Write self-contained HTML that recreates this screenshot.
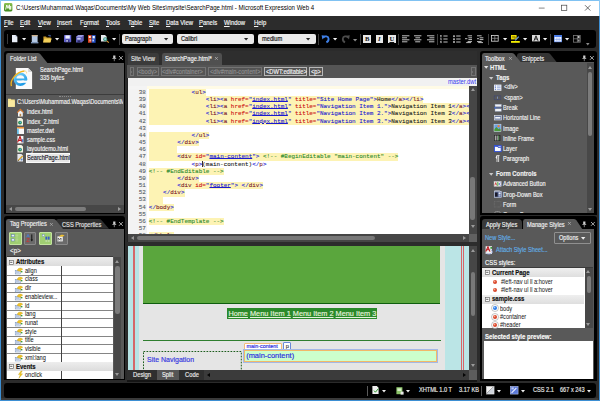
<!DOCTYPE html>
<html><head><meta charset="utf-8"><title>Microsoft Expression Web 4</title>
<style>
*{box-sizing:border-box;margin:0;padding:0}
html,body{width:600px;height:401px;overflow:hidden;background:#2b2b2b}
body{position:relative;font-family:"Liberation Sans",sans-serif;font-size:6.1px;color:#ececec;line-height:1;-webkit-text-stroke:0.16px}
.a{position:absolute}
.t{position:absolute;white-space:nowrap;line-height:8px;height:8px;transform:scaleX(.885);transform-origin:0 50%}
.t.d{transform:none}
u{text-decoration-thickness:0.5px;text-underline-offset:0.6px}
svg{position:absolute;overflow:visible}
#win{left:0;top:0;width:600px;height:401px;border:1.4px solid #3d8fd3;border-top:1px solid #80c2f2}
#title{left:1.2px;top:1px;width:597.6px;height:15px;background:#fff}
#menu{left:1.4px;top:16px;width:597.2px;height:14px;background:#2c2c2c}
#tb{left:4px;top:30px;width:592.4px;height:17.6px;background:#000;border-radius:3px}
#sb{left:4px;top:381.5px;width:593.5px;height:16px;background:#000;border-radius:3px}
.m{top:19.4px;font-size:6.72px;color:#f4f4f4}
.pan{background:#000;border-radius:3px 3px 0 0}
.pb{background:#595959}
.dd{background:#e9e9e9;border-radius:2px;top:33.6px;height:10.6px}
.dd .t{color:#111;top:1.4px;font-size:6.44px}
.car{width:0;height:0;border-left:1.9px solid transparent;border-right:1.9px solid transparent;border-top:2.2px solid #222}
.carw{width:0;height:0;border-left:1.8px solid transparent;border-right:1.8px solid transparent;border-top:2px solid #e8e8e8}
.sep{width:0.9px;background:#3e3e3e;top:33.5px;height:11px}
.fl{font-size:6.1px;color:#f0f0f0}
.bc{top:67.3px;height:9px;border:0.7px solid #747474;color:#8e8e8e;font-size:5.6px;line-height:7.4px;padding:0 1px;white-space:nowrap}
.code{font-family:"Liberation Mono",monospace;font-size:5.95px;-webkit-text-stroke:0.1px;left:128px;white-space:pre;height:7.17px;line-height:7.17px;width:341px}
.ln{position:absolute;left:0;width:19px;text-align:right;color:#555c64;padding-right:1px;background:#f3f3f3;height:7.3px}
.hl{background:#fdf3b4}
.c{position:absolute;left:21px;top:0;height:7.3px}
.tg{color:#2525d8}.nm{color:#7a1a2a}.at{color:#cc1111}.vl{color:#1a1ad0}.cm{color:#2e8b2e}.tx{color:#222}
.vl u{text-decoration-thickness:0.4px;text-underline-offset:0.4px}
.tbx{font-size:6.1px;color:#f2f2f2}
.row{position:absolute;left:6px;width:106px;height:8.6px;background:#fff;border-bottom:0.8px solid #c8c8c8}
</style></head><body>
<div id="win" class="a"></div>
<div id="title" class="a"></div>
<div class="a" style="left:0;top:0;width:1.2px;height:16px;background:#8ecaf4"></div>
<div class="a" style="left:598.8px;top:0;width:1.2px;height:16px;background:#8ecaf4"></div>

<svg class="a" style="left:4.4px;top:3.4px" width="8.4" height="8.4" viewBox="0 0 8.4 8.4"><defs><linearGradient id="gi" x1="0" y1="0" x2="0" y2="1"><stop offset="0" stop-color="#8cc152"/><stop offset="1" stop-color="#3f8a1e"/></linearGradient></defs><rect width="8.4" height="8.4" rx="1.4" fill="url(#gi)"/><path d="M1.6 6.6 L2.8 2 L4 5.4 L5.4 1.8 L5.6 6.6" stroke="#fff" stroke-width="0.9" fill="none"/><rect x="6" y="3" width="1.3" height="3.6" fill="#eaf5d8"/></svg>
<div class="t" style="left:15.6px;top:3.6px;font-size:6.89px;color:#000;-webkit-text-stroke:0">C:\Users\Muhammad.Waqas\Documents\My Web Sites\mysite\SearchPage.html - Microsoft Expression Web 4</div>
<svg class="a" style="left:530px;top:1px" width="68" height="15" viewBox="530 1 68 15"><path d="M538.8 8.1h5.8" stroke="#555" stroke-width="0.7"/><rect x="561.6" y="5.2" width="5.2" height="5.2" fill="none" stroke="#444" stroke-width="0.7"/><path d="M585 5.2l5.4 5.4M590.4 5.2l-5.4 5.4" stroke="#333" stroke-width="0.7"/></svg>
<div id="menu" class="a"></div>
<div class="t m" style="left:4px"><u>F</u>ile</div>
<div class="t m" style="left:20.4px"><u>E</u>dit</div>
<div class="t m" style="left:38px"><u>V</u>iew</div>
<div class="t m" style="left:57.4px"><u>I</u>nsert</div>
<div class="t m" style="left:80px">F<u>o</u>rmat</div>
<div class="t m" style="left:106px"><u>T</u>ools</div>
<div class="t m" style="left:128px">T<u>a</u>ble</div>
<div class="t m" style="left:149px"><u>S</u>ite</div>
<div class="t m" style="left:166px"><u>D</u>ata View</div>
<div class="t m" style="left:199.4px"><u>P</u>anels</div>
<div class="t m" style="left:224px"><u>W</u>indow</div>
<div class="t m" style="left:254px"><u>H</u>elp</div>
<div id="tb" class="a"></div><div class="a" style="left:7px;top:34px;width:0.8px;height:9.5px;background:#3a3a3a"></div>
<svg style="left:12px;top:35.2px" width="5.4" height="7.2" viewBox="0 0 5.4 7.2"><path d="M0 0h3.6l1.8 1.8v5.4h-5.4z" fill="#e9eef7"/><path d="M3.6 0v1.8h1.8z" fill="#9fb0cc"/></svg>
<svg style="left:22.099999999999998px;top:38.4px" width="4.2" height="2.6" viewBox="0 0 4.2 2.6"><path d="M0 0H4.2L2.1 2.6z" fill="#f2f2f2"/></svg>
<svg style="left:31px;top:34.6px" width="7.4" height="8.4" viewBox="0 0 7.4 8.4"><rect x="0.8" y="0" width="5.8" height="7.6" fill="#b4c8e2"/><rect x="0.8" y="0" width="5.8" height="1.3" fill="#cbb08a"/><rect x="0" y="7" width="7.4" height="1.4" fill="#7f96b8"/></svg>
<svg style="left:43.4px;top:34.8px" width="8.8" height="7.6" viewBox="0 0 8.8 7.6"><path d="M0.4 1.4h2.6l0.8 1h4v4.8h-7.4z" fill="#c89a2a"/><path d="M0 7.4l1.4-4h7.4l-1.6 4z" fill="#f2cf5a"/><path d="M5.2 0.4l2.2 0l-0.4 1.4" stroke="#5a7ad0" stroke-width="0.7" fill="none"/></svg>
<svg style="left:54.5px;top:38.4px" width="4.2" height="2.6" viewBox="0 0 4.2 2.6"><path d="M0 0H4.2L2.1 2.6z" fill="#f2f2f2"/></svg>
<svg style="left:63.8px;top:35px" width="7.2" height="7.2" viewBox="0 0 7.2 7.2"><rect width="7.2" height="7.2" rx="0.6" fill="#6262d0"/><rect x="1.4" y="0.4" width="4.4" height="3.2" fill="#eef0ff"/><rect x="1.8" y="4.6" width="3.6" height="2.6" fill="#34347c"/><rect x="2.4" y="5" width="1.3" height="1.8" fill="#dfe2ff"/></svg>
<svg style="left:76.2px;top:35px" width="7.8" height="7.4" viewBox="0 0 7.8 7.4"><path d="M2.2 0h5.6v5.2l-2 2.2h-5.8v-5.4z" fill="#5c5cb4"/><path d="M2.2 0h5.6l-2 2h-5.8z" fill="#9a9ae0"/><rect x="1.2" y="2.8" width="3.4" height="1.8" fill="#c8ccf4"/><rect x="1.6" y="5.4" width="2.6" height="2" fill="#2c2c68"/></svg>
<svg style="left:88.4px;top:34.8px" width="7.6" height="7.8" viewBox="0 0 7.6 7.8"><rect width="3.7" height="7.8" fill="#d8401c"/><rect x="3.7" width="3.9" height="7.8" fill="#2450c4"/><rect x="0.8" y="1" width="2" height="2" fill="#fbe0d6"/><rect x="1.4" y="4.4" width="1.8" height="2" fill="#f4b4a0"/><rect x="4.6" y="1" width="2.2" height="2.4" fill="#f0f4ff"/><rect x="4.4" y="4.6" width="1.6" height="1.8" fill="#c0ccf4"/></svg>
<svg style="left:100.6px;top:35px" width="8.2" height="7.8" viewBox="0 0 8.2 7.8"><path d="M0 0h4l1.6 1.6v5h-5.6z" fill="#e4e8ee"/><circle cx="4.2" cy="4.2" r="2" fill="#3f9a78"/><circle cx="4.2" cy="4.2" r="1.1" fill="#9ccbe6"/><path d="M5.8 5.8l2 1.8" stroke="#d89a30" stroke-width="1.1"/></svg>
<svg style="left:111.9px;top:38.4px" width="4.2" height="2.6" viewBox="0 0 4.2 2.6"><path d="M0 0H4.2L2.1 2.6z" fill="#f2f2f2"/></svg>
<div class="a sep" style="left:119px"></div>
<div class="a dd" style="left:122px;width:51.4px"><div class="t" style="left:3.200000000000003px">Paragraph</div><svg style="left:41.599999999999994px;top:4.2px" width="4.2" height="2.6" viewBox="0 0 4.2 2.6"><path d="M0 0H4.2L2.1 2.6z" fill="#222"/></svg></div>
<div class="a dd" style="left:177.4px;width:76.8px"><div class="t" style="left:3.5999999999999943px">Calibri</div><svg style="left:67.0px;top:4.2px" width="4.2" height="2.6" viewBox="0 0 4.2 2.6"><path d="M0 0H4.2L2.1 2.6z" fill="#222"/></svg></div>
<div class="a dd" style="left:258px;width:57.6px"><div class="t" style="left:4px">medium</div><svg style="left:47.8px;top:4.2px" width="4.2" height="2.6" viewBox="0 0 4.2 2.6"><path d="M0 0H4.2L2.1 2.6z" fill="#222"/></svg></div>
<div class="a sep" style="left:318.4px"></div>
<svg style="left:322px;top:34.8px" width="7.4" height="7.6" viewBox="0 0 7.4 7.6"><path d="M1.2 2.6 C3 0.6 6.4 1 6.6 3.8 C6.7 5.6 5.6 6.8 4.4 7.4" stroke="#3f7fe6" stroke-width="1.9" fill="none"/><path d="M-0.4 0.2l4.2 0.6l-3.4 3.6z" fill="#3f7fe6"/></svg>
<svg style="left:332.7px;top:38.4px" width="4.2" height="2.6" viewBox="0 0 4.2 2.6"><path d="M0 0H4.2L2.1 2.6z" fill="#f2f2f2"/></svg>
<svg style="left:342px;top:34.8px" width="7.4" height="7.6" viewBox="0 0 7.4 7.6"><path d="M6.2 2.6 C4.4 0.6 1 1 0.8 3.8 C0.7 5.6 1.8 6.8 3 7.4" stroke="#4c4c4c" stroke-width="1.8" fill="none"/><path d="M7.8 0.2l-4.2 0.6l3.4 3.6z" fill="#4c4c4c"/></svg>
<svg style="left:352.7px;top:38.6px" width="4.2" height="2.6" viewBox="0 0 4.2 2.6"><path d="M0 0H4.2L2.1 2.6z" fill="#8a8a8a"/></svg>
<div class="a sep" style="left:360px"></div>
<div class="a" style="left:363.4px;top:35px;width:7.6px;height:7.6px;background:#e8e8e8;display:flex;align-items:center;justify-content:center;color:#111;font-family:'Liberation Serif',serif;font-size:6.6px;line-height:7.6px;-webkit-text-stroke:0;font-weight:bold">B</div>
<div class="a" style="left:375.6px;top:35px;width:7.6px;height:7.6px;background:#e8e8e8;display:flex;align-items:center;justify-content:center;color:#111;font-family:'Liberation Serif',serif;font-size:6.6px;line-height:7.6px;-webkit-text-stroke:0;font-weight:bold;font-style:italic">I</div>
<div class="a" style="left:388px;top:35px;width:7.6px;height:7.6px;background:#e8e8e8;display:flex;align-items:center;justify-content:center;color:#111;font-family:'Liberation Serif',serif;font-size:6.6px;line-height:7.6px;-webkit-text-stroke:0;font-weight:bold"><u>U</u></div>
<div class="a sep" style="left:398.4px"></div>
<svg style="left:402px;top:35px" width="8" height="8" viewBox="0 0 8 8"><path d="M0 0.8H7.4" stroke="#d8d8d8" stroke-width="0.9"/><path d="M0 2.8H5" stroke="#d8d8d8" stroke-width="0.9"/><path d="M0 4.8H7.4" stroke="#d8d8d8" stroke-width="0.9"/><path d="M0 6.8H5.4" stroke="#d8d8d8" stroke-width="0.9"/></svg>
<svg style="left:414px;top:35px" width="8" height="8" viewBox="0 0 8 8"><path d="M0 0.8H7.4" stroke="#d8d8d8" stroke-width="0.9"/><path d="M1.4 2.8H6" stroke="#d8d8d8" stroke-width="0.9"/><path d="M0 4.8H7.4" stroke="#d8d8d8" stroke-width="0.9"/><path d="M1.2 6.8H6.2" stroke="#d8d8d8" stroke-width="0.9"/></svg>
<svg style="left:426.6px;top:35px" width="8" height="8" viewBox="0 0 8 8"><path d="M0 0.8H7.4" stroke="#d8d8d8" stroke-width="0.9"/><path d="M2.4 2.8H7.4" stroke="#d8d8d8" stroke-width="0.9"/><path d="M0 4.8H7.4" stroke="#d8d8d8" stroke-width="0.9"/><path d="M2 6.8H7.4" stroke="#d8d8d8" stroke-width="0.9"/></svg>
<div class="a sep" style="left:437.4px"></div>
<svg style="left:440.4px;top:35px" width="8" height="8" viewBox="0 0 8 8"><path d="M3.4 1H7.6" stroke="#d8d8d8" stroke-width="0.9"/><path d="M3.4 4H7.6" stroke="#d8d8d8" stroke-width="0.9"/><path d="M3.4 7H7.6" stroke="#d8d8d8" stroke-width="0.9"/><path d="M0.2 0.6H1.6" stroke="#d8d8d8" stroke-width="0.9"/><path d="M0.2 1.8H1.6" stroke="#d8d8d8" stroke-width="0.9"/><path d="M0.2 3.8H1.6" stroke="#d8d8d8" stroke-width="0.9"/><path d="M0.6 4.8H1.6" stroke="#d8d8d8" stroke-width="0.9"/><path d="M0.2 6.6H1.6" stroke="#d8d8d8" stroke-width="0.9"/><path d="M0.4 7.6H1.6" stroke="#d8d8d8" stroke-width="0.9"/></svg>
<svg style="left:452.6px;top:35px" width="8" height="8" viewBox="0 0 8 8"><path d="M3.2 1H7.6" stroke="#d8d8d8" stroke-width="0.9"/><path d="M3.2 4H7.6" stroke="#d8d8d8" stroke-width="0.9"/><path d="M3.2 7H7.6" stroke="#d8d8d8" stroke-width="0.9"/><path d="M0.2 0.8H1.8" stroke="#d8d8d8" stroke-width="0.9"/><path d="M0.2 1.6H1.8" stroke="#d8d8d8" stroke-width="0.9"/><path d="M0.2 3.8H1.8" stroke="#d8d8d8" stroke-width="0.9"/><path d="M0.2 4.6H1.8" stroke="#d8d8d8" stroke-width="0.9"/><path d="M0.2 6.6H1.8" stroke="#d8d8d8" stroke-width="0.9"/><path d="M0.2 7.4H1.8" stroke="#d8d8d8" stroke-width="0.9"/></svg>
<svg style="left:465px;top:35px" width="8" height="8" viewBox="0 0 8 8"><path d="M2.6 0.8H7" stroke="#cfcfcf" stroke-width="0.9"/><path d="M3.4 2.8H7" stroke="#cfcfcf" stroke-width="0.9"/><path d="M3.4 4.6H7" stroke="#cfcfcf" stroke-width="0.9"/><path d="M2.6 6.6H7" stroke="#cfcfcf" stroke-width="0.9"/><path d="M0 3.7H2.4" stroke="#cfcfcf" stroke-width="0.9"/><path d="M1.2 7.6H6" stroke="#cfcfcf" stroke-width="0.9"/></svg>
<svg style="left:477.4px;top:35px" width="8" height="8" viewBox="0 0 8 8"><path d="M0 0.8H4.6" stroke="#cfcfcf" stroke-width="0.9"/><path d="M2.6 2.8H6.4" stroke="#cfcfcf" stroke-width="0.9"/><path d="M2.6 4.6H6.4" stroke="#cfcfcf" stroke-width="0.9"/><path d="M0 6.6H4.6" stroke="#cfcfcf" stroke-width="0.9"/><path d="M0 3.7H2" stroke="#cfcfcf" stroke-width="0.9"/><path d="M1.2 7.6H6" stroke="#cfcfcf" stroke-width="0.9"/></svg>
<div class="a sep" style="left:487.6px"></div>
<svg style="left:491.2px;top:35.2px" width="7.6" height="6.6" viewBox="0 0 7.6 6.6"><rect x="0.4" y="0.4" width="6.8" height="5.8" fill="none" stroke="#dcdcdc" stroke-width="0.8"/><path d="M0.4 3.3H7.2M3.8 0.4V6.2" stroke="#9a9a9a" stroke-width="0.7"/></svg>
<svg style="left:502.5px;top:38.4px" width="4.2" height="2.6" viewBox="0 0 4.2 2.6"><path d="M0 0H4.2L2.1 2.6z" fill="#f2f2f2"/></svg>
<svg style="left:511.4px;top:34.8px" width="8.8" height="7.8" viewBox="0 0 8.8 7.8"><rect x="0" y="0" width="5.6" height="4.4" fill="#f0e000"/><path d="M1 3.4l1-2.4l1 2.4M3.4 1v2.4h1.2v-1.4h-1.2" stroke="#6a5a00" stroke-width="0.5" fill="none"/><path d="M7.8 1.6l-3.6 3.8" stroke="#6a9ae0" stroke-width="1.3"/><rect x="0" y="6" width="8.8" height="1.8" fill="#f4ee00"/></svg>
<svg style="left:522.7px;top:38.4px" width="4.2" height="2.6" viewBox="0 0 4.2 2.6"><path d="M0 0H4.2L2.1 2.6z" fill="#f2f2f2"/></svg>
<svg style="left:532px;top:35px" width="8" height="6.4" viewBox="0 0 8 6.4"><rect width="8" height="6.4" fill="#d8d8d8"/><path d="M2 5.8l2-5l2 5M2.8 4h2.4" stroke="#222" stroke-width="1" fill="none"/></svg>
<svg style="left:543.3000000000001px;top:38.4px" width="4.2" height="2.6" viewBox="0 0 4.2 2.6"><path d="M0 0H4.2L2.1 2.6z" fill="#f2f2f2"/></svg>
<div class="a sep" style="left:550.4px"></div>
<svg style="left:554px;top:35px" width="8" height="7.2" viewBox="0 0 8 7.2"><rect width="8" height="7.2" fill="#4a7ce6"/><rect x="0.6" y="2" width="6.8" height="4.6" fill="#eef2ff"/><path d="M2.9 2.4v4M5.1 2.4v4M0.8 4.4h6.4" stroke="#6a90e0" stroke-width="0.5"/></svg>
<svg style="left:564.7px;top:38.4px" width="4.2" height="2.6" viewBox="0 0 4.2 2.6"><path d="M0 0H4.2L2.1 2.6z" fill="#f2f2f2"/></svg>
<svg style="left:573px;top:35px" width="7.6" height="7.6" viewBox="0 0 7.6 7.6"><rect x="0.4" y="0.4" width="6.8" height="6.8" fill="none" stroke="#7a7a7a" stroke-width="0.8"/><path d="M0.4 3.8H7.2M4.4 0.4V7.2" stroke="#8a8a8a" stroke-width="0.7"/><rect x="4.8" y="1" width="1.8" height="2" fill="#bdbdbd"/><rect x="4.8" y="4.6" width="1.8" height="2" fill="#9a9a9a"/></svg>
<svg style="left:585.8px;top:43.2px" width="3.6" height="2.6" viewBox="0 0 3.6 2.6"><path d="M0 0H3.6L1.8 2.6z" fill="#8a8a8a"/></svg><div class="a pan" style="left:4px;top:51.2px;width:121.2px;height:162.6px;border-radius:3px 3px 0 0"></div>
<svg style="left:5.6px;top:53px" width="42" height="10" viewBox="0 0 42 10"><path d="M0 10V2.4Q0 0 2.4 0H31.4Q33.4 0 34.6 1.4L41.4 10z" fill="#595959"/></svg>
<div class="a pb" style="left:5.6px;top:62.6px;width:118.4px;height:150px"></div>
<div class="t fl" style="left:10px;top:54.6px;font-size:6.44px">Folder List</div>
<svg style="left:111.8px;top:55px" width="4.6" height="6.4" viewBox="0 0 4.6 6.4"><path d="M1.2 0.5h2.2v2.4h0.8v0.8h-3.8v-0.8h0.8z" fill="#cfcfcf"/><path d="M2.3 3.7v2.5" stroke="#cfcfcf" stroke-width="0.6"/></svg>
<svg style="left:119.4px;top:56.4px" width="3.8" height="3.8" viewBox="0 0 3.8 3.8"><path d="M0 0L3.8 3.8M3.8 0L0 3.8" stroke="#d8d8d8" stroke-width="0.75"/></svg>
<svg style="left:9px;top:66px" width="24" height="25" viewBox="9 66 24 25"><defs><linearGradient id="ieg" x1="0" y1="0" x2="0.6" y2="1"><stop offset="0" stop-color="#7fd4fa"/><stop offset="1" stop-color="#1f9be6"/></linearGradient></defs><path d="M15.8 68h12.4l3.9 3.9v17.2h-16.3z" fill="#fafafa"/><path d="M28.2 68v3.9h3.9z" fill="#d4d4d4"/><circle cx="20.4" cy="79.2" r="5.4" fill="none" stroke="url(#ieg)" stroke-width="2.8"/><rect x="15.4" y="78.5" width="11.8" height="2" fill="#3aaeee"/><rect x="21.6" y="80.6" width="6.4" height="2.2" fill="#fafafa"/><path d="M11.4 86.2C9.8 80.4 15.6 72 24.4 71" fill="none" stroke="#f4b51e" stroke-width="1.3"/><path d="M24.4 71C26.2 71 26.8 72 26.5 73.4" fill="none" stroke="#f4c860" stroke-width="0.7"/></svg>
<div class="t fl" style="left:40px;top:65.8px;font-size:6.33px">SearchPage.html</div>
<div class="t fl" style="left:40px;top:74.2px;font-size:6.33px">335 bytes</div>
<div class="a" style="left:5.6px;top:94.4px;width:118.4px;height:0.8px;background:#3c3c3c"></div>
<div class="a" style="left:58.8px;top:96.4px;width:12.6px;height:0;border-top:0.9px dotted #8a8a8a"></div>
<svg style="left:8px;top:98.4px" width="6.8" height="8.8" viewBox="0 0 6.8 8.8"><path d="M0 0.8h2.6l0.8 0.8h3.4v7.2h-6.8z" fill="#f6e28c"/><path d="M0 2.6h6.8v6.2h-6.8z" fill="#f9ea9f"/></svg>
<div class="a" style="left:17.4px;top:98.4px;width:106px;height:9px;overflow:hidden"><div class="t fl" style="left:0;top:0;font-size:6.33px">C:\Users\Muhammad.Waqas\Documents\My Web Sites\mysite</div></div>
<svg style="left:17.4px;top:108.6px" width="7" height="7.6" viewBox="0 0 7 7.6"><path d="M0.2 3.6L3.4 0.4L6.6 3.6" stroke="#e07a2a" stroke-width="1.1" fill="none"/><path d="M1 3.6L3.4 1.4L5.8 3.6V7.4H1z" fill="#f4f4f4"/><rect x="2.6" y="4.8" width="1.6" height="2.6" fill="#b8864a"/></svg>
<div class="t fl" style="left:27px;top:108.39999999999999px;font-size:6.33px">index.html</div>
<svg style="left:17.4px;top:117.8px" width="7" height="7.6" viewBox="0 0 7 7.6"><path d="M0.4 0h4l1.6 1.6v6h-5.6z" fill="#f4f4e4"/><circle cx="3" cy="4.6" r="1.9" fill="#2a8a4a"/><circle cx="3.3" cy="4.3" r="0.9" fill="#5ab0e8"/></svg>
<div class="t fl" style="left:27px;top:117.6px;font-size:6.33px">index_2.html</div>
<svg style="left:17.4px;top:127px" width="7" height="7.6" viewBox="0 0 7 7.6"><rect x="0" y="0" width="7" height="7" fill="#fafafa"/><rect x="0" y="0" width="7" height="1.6" fill="#e8923a"/><rect x="0" y="1.6" width="1.8" height="5.4" fill="#6ac0e8"/></svg>
<div class="t fl" style="left:27px;top:126.8px;font-size:6.33px">master.dwt</div>
<svg style="left:17.4px;top:136.2px" width="7" height="7.6" viewBox="0 0 7 7.6"><rect x="0.4" y="0" width="6" height="7.4" fill="#f4f4f4"/><path d="M0.6 6.4L3 0.6L5.2 6.4M1.6 4.4h2.8" stroke="#c0181c" stroke-width="1.1" fill="none"/><rect x="4.8" y="3.2" width="1.6" height="3" fill="#5a80c8"/></svg>
<div class="t fl" style="left:27px;top:136.0px;font-size:6.33px">sample.css</div>
<svg style="left:17.4px;top:145.2px" width="7" height="7.6" viewBox="0 0 7 7.6"><path d="M0.4 0h4l1.6 1.6v6h-5.6z" fill="#f4f4e4"/><circle cx="3" cy="4.6" r="1.9" fill="#2a8a4a"/><circle cx="3.3" cy="4.3" r="0.9" fill="#5ab0e8"/></svg>
<div class="t fl" style="left:27px;top:145.0px;font-size:6.33px">layoutdemo.html</div>
<svg style="left:17.4px;top:154.2px" width="7" height="7.6" viewBox="0 0 7 7.6"><path d="M0.4 0h4l1.6 1.6v6h-5.6z" fill="#e8e8ec"/><path d="M1 6.6l4.6-4.6" stroke="#d8a020" stroke-width="1.2"/><path d="M0.8 7l1.2-0.4l-0.8-0.8z" fill="#444"/><circle cx="4.6" cy="5.4" r="1" fill="#5a8ad0"/></svg>
<div class="a" style="left:26px;top:153.2px;width:44.2px;height:9.4px;background:#e6e6e6;border:0.6px solid #fafafa"></div>
<div class="t" style="left:27.4px;top:154.0px;font-size:6.33px;color:#1a1a2a">SearchPage.html</div>
<div class="a" style="left:5.6px;top:205px;width:118.4px;height:7.6px;background:#474747"></div>
<div class="a" style="left:8.6px;top:206.5px;width:0;height:0;border-top:2.3px solid transparent;border-bottom:2.3px solid transparent;border-right:3.4px solid #9a9a9a"></div>
<div class="a" style="left:117.6px;top:206.5px;width:0;height:0;border-top:2.3px solid transparent;border-bottom:2.3px solid transparent;border-left:3.4px solid #9a9a9a"></div>
<div class="a" style="left:14.6px;top:206.8px;width:71.6px;height:4.2px;background:#7c7c7c;border-radius:2.1px"></div>
<div class="a pan" style="left:4px;top:215.6px;width:121.2px;height:164.8px"></div>
<svg style="left:56px;top:219.2px" width="54" height="9.8" viewBox="0 0 54 9.8"><path d="M0 9.8V2.4Q0 0 2.4 0H42.6Q44.6 0 45.8 1.4L53 9.8z" fill="#2f2f2f"/></svg>
<svg style="left:5.6px;top:219px" width="58" height="10" viewBox="0 0 58 10"><path d="M0 10V2.4Q0 0 2.4 0H47Q49 0 50.2 1.4L57 10z" fill="#595959"/></svg>
<div class="a pb" style="left:5.6px;top:228.8px;width:118.4px;height:150px"></div>
<div class="t fl" style="left:9.6px;top:220.4px;font-size:6.44px">Tag Properties</div>
<svg style="left:49.6px;top:222.6px" width="2.8" height="2.8" viewBox="0 0 2.8 2.8"><path d="M0 0L2.8 2.8M2.8 0L0 2.8" stroke="#b0b0b0" stroke-width="0.7"/></svg>
<div class="t fl" style="left:62.4px;top:220.6px;font-size:6.44px;color:#e0e0e0">CSS Properties</div>
<svg style="left:111.8px;top:220.6px" width="4.6" height="6.4" viewBox="0 0 4.6 6.4"><path d="M1.2 0.5h2.2v2.4h0.8v0.8h-3.8v-0.8h0.8z" fill="#cfcfcf"/><path d="M2.3 3.7v2.5" stroke="#cfcfcf" stroke-width="0.6"/></svg>
<svg style="left:119.4px;top:222px" width="3.8" height="3.8" viewBox="0 0 3.8 3.8"><path d="M0 0L3.8 3.8M3.8 0L0 3.8" stroke="#d8d8d8" stroke-width="0.75"/></svg>
<div class="a" style="left:8.8px;top:232px;width:12.8px;height:13px;background:#9fce72;border:0.7px solid #c4e4a0;border-radius:1px"></div>
<svg style="left:11.200000000000001px;top:234.4px" width="8" height="8" viewBox="0 0 8 8"><rect x="0.4" y="0.6" width="3" height="2.2" fill="#e8eef8" stroke="#5a7ab0" stroke-width="0.5"/><rect x="0.4" y="4.8" width="3" height="2.2" fill="#e8eef8" stroke="#5a7ab0" stroke-width="0.5"/><path d="M4.4 1.7h3M4.4 5.9h3M6 0v8" stroke="#b8d89a" stroke-width="0.7"/></svg>
<div class="a" style="left:23.6px;top:232px;width:12.8px;height:13px;background:#6b6b6b;border:0.7px solid #8a8a8a;border-radius:1px"></div>
<svg style="left:26.0px;top:234.4px" width="8" height="8" viewBox="0 0 8 8"><path d="M0.6 3.2L2 0.4L3.4 3.2M1.1 2.2h1.8" stroke="#4a7ae0" stroke-width="0.7" fill="none"/><path d="M0.6 4.6h2.8l-2.8 3h2.8" stroke="#d03030" stroke-width="0.7" fill="none"/><path d="M5.8 0.4v6" stroke="#111" stroke-width="1"/><path d="M4.6 5.4h2.4l-1.2 2z" fill="#111"/></svg>
<div class="a" style="left:39.4px;top:232px;width:12.8px;height:13px;background:#9fce72;border:0.7px solid #c4e4a0;border-radius:1px"></div>
<svg style="left:41.8px;top:234.4px" width="8" height="8" viewBox="0 0 8 8"><rect x="0.2" y="0.4" width="2.2" height="2" fill="#e8eef8" stroke="#5a7ab0" stroke-width="0.4"/><rect x="3.4" y="2.6" width="1.8" height="3" fill="#3a5ac8"/><rect x="5.8" y="2.6" width="1.8" height="3" fill="#3a5ac8"/><rect x="3.4" y="6.2" width="1.8" height="1.6" fill="#c0dca8"/><rect x="5.8" y="6.2" width="1.8" height="1.6" fill="#c0dca8"/></svg>
<div class="a" style="left:55px;top:232px;width:12.8px;height:13px;background:#6b6b6b;border:0.7px solid #8a8a8a;border-radius:1px"></div>
<svg style="left:57.4px;top:234.4px" width="8" height="8" viewBox="0 0 8 8"><rect x="0.4" y="2.4" width="5.4" height="5" fill="#f0f0f0"/><path d="M1.2 6.6V4l1.4 1.6L4 4v2.6" stroke="#333" stroke-width="0.6" fill="none"/><path d="M2 2.6C3 0.6 6 0.2 7.6 1.4L5.4 2.8z" fill="#f0c030"/></svg>
<div class="t fl" style="left:9.6px;top:247.4px;font-size:7.12px">&lt;p&gt;</div>
<div class="a" style="left:6.6px;top:256.2px;width:106px;height:122.6px;background:#fff;border-top:0.8px solid #3a3a3a"></div>
<div class="a" style="left:6.6px;top:257px;width:106px;height:9.4px;background:linear-gradient(#ededed,#dcdcdc)"></div>
<svg style="left:8.8px;top:260px" width="4.6" height="4.6" viewBox="0 0 4.6 4.6"><rect x="0.3" y="0.3" width="4" height="4" fill="#fff" stroke="#555" stroke-width="0.6"/><path d="M1.2 2.3h2.2" stroke="#111" stroke-width="0.7"/></svg>
<div class="t" style="left:16.4px;top:258.4px;font-size:6.78px;font-weight:bold;color:#111">Attributes</div>
<div class="a" style="left:6.6px;top:274.80px;width:106px;height:0.8px;background:#858585"></div>
<svg style="left:15px;top:267.20px" width="8" height="7.4" viewBox="0 0 8 7.4"><rect x="0.2" y="3.4" width="5" height="3.6" fill="#e6eef8" stroke="#6a8ab8" stroke-width="0.5"/><path d="M1 5h3.4" stroke="#3a5a9a" stroke-width="0.5"/><path d="M2.2 3.4C3 0.6 6.4 0.6 7.8 2.2L5.6 3.6L6.2 4.6L4.4 4.2z" fill="#f0c428" stroke="#b88a10" stroke-width="0.3"/><rect x="6" y="4" width="1.4" height="1.4" fill="#3a9a3a"/></svg>
<div class="t" style="left:25.4px;top:266.80px;font-size:6.33px;color:#111;-webkit-text-stroke:0.04px">align</div>
<div class="a" style="left:6.6px;top:283.49px;width:106px;height:0.8px;background:#858585"></div>
<svg style="left:15px;top:275.89px" width="8" height="7.4" viewBox="0 0 8 7.4"><rect x="0.2" y="3.4" width="5" height="3.6" fill="#e6eef8" stroke="#6a8ab8" stroke-width="0.5"/><path d="M1 5h3.4" stroke="#3a5a9a" stroke-width="0.5"/><path d="M2.2 3.4C3 0.6 6.4 0.6 7.8 2.2L5.6 3.6L6.2 4.6L4.4 4.2z" fill="#f0c428" stroke="#b88a10" stroke-width="0.3"/><rect x="6" y="4" width="1.4" height="1.4" fill="#3a9a3a"/></svg>
<div class="t" style="left:25.4px;top:275.49px;font-size:6.33px;color:#111;-webkit-text-stroke:0.04px">class</div>
<div class="a" style="left:6.6px;top:292.18px;width:106px;height:0.8px;background:#858585"></div>
<svg style="left:15px;top:284.58px" width="8" height="7.4" viewBox="0 0 8 7.4"><rect x="0.2" y="3.4" width="5" height="3.6" fill="#e6eef8" stroke="#6a8ab8" stroke-width="0.5"/><path d="M1 5h3.4" stroke="#3a5a9a" stroke-width="0.5"/><path d="M2.2 3.4C3 0.6 6.4 0.6 7.8 2.2L5.6 3.6L6.2 4.6L4.4 4.2z" fill="#f0c428" stroke="#b88a10" stroke-width="0.3"/><rect x="6" y="4" width="1.4" height="1.4" fill="#3a9a3a"/></svg>
<div class="t" style="left:25.4px;top:284.18px;font-size:6.33px;color:#111;-webkit-text-stroke:0.04px">dir</div>
<div class="a" style="left:6.6px;top:300.87px;width:106px;height:0.8px;background:#858585"></div>
<svg style="left:15px;top:293.27px" width="8" height="7.4" viewBox="0 0 8 7.4"><rect x="0.2" y="3.4" width="5" height="3.6" fill="#e6eef8" stroke="#6a8ab8" stroke-width="0.5"/><path d="M1 5h3.4" stroke="#3a5a9a" stroke-width="0.5"/><path d="M2.2 3.4C3 0.6 6.4 0.6 7.8 2.2L5.6 3.6L6.2 4.6L4.4 4.2z" fill="#f0c428" stroke="#b88a10" stroke-width="0.3"/><rect x="6" y="4" width="1.4" height="1.4" fill="#3a9a3a"/></svg>
<div class="t" style="left:25.4px;top:292.87px;font-size:6.33px;color:#111;-webkit-text-stroke:0.04px">enableview...</div>
<div class="a" style="left:6.6px;top:309.56px;width:106px;height:0.8px;background:#858585"></div>
<svg style="left:15px;top:301.96px" width="8" height="7.4" viewBox="0 0 8 7.4"><rect x="0.2" y="3.4" width="5" height="3.6" fill="#e6eef8" stroke="#6a8ab8" stroke-width="0.5"/><path d="M1 5h3.4" stroke="#3a5a9a" stroke-width="0.5"/><path d="M2.2 3.4C3 0.6 6.4 0.6 7.8 2.2L5.6 3.6L6.2 4.6L4.4 4.2z" fill="#f0c428" stroke="#b88a10" stroke-width="0.3"/><rect x="6" y="4" width="1.4" height="1.4" fill="#3a9a3a"/></svg>
<div class="t" style="left:25.4px;top:301.56px;font-size:6.33px;color:#111;-webkit-text-stroke:0.04px">id</div>
<div class="a" style="left:6.6px;top:318.25px;width:106px;height:0.8px;background:#858585"></div>
<svg style="left:15px;top:310.65px" width="8" height="7.4" viewBox="0 0 8 7.4"><rect x="0.2" y="3.4" width="5" height="3.6" fill="#e6eef8" stroke="#6a8ab8" stroke-width="0.5"/><path d="M1 5h3.4" stroke="#3a5a9a" stroke-width="0.5"/><path d="M2.2 3.4C3 0.6 6.4 0.6 7.8 2.2L5.6 3.6L6.2 4.6L4.4 4.2z" fill="#f0c428" stroke="#b88a10" stroke-width="0.3"/><rect x="6" y="4" width="1.4" height="1.4" fill="#3a9a3a"/></svg>
<div class="t" style="left:25.4px;top:310.25px;font-size:6.33px;color:#111;-webkit-text-stroke:0.04px">lang</div>
<div class="a" style="left:6.6px;top:326.94px;width:106px;height:0.8px;background:#858585"></div>
<svg style="left:15px;top:319.34px" width="8" height="7.4" viewBox="0 0 8 7.4"><rect x="0.2" y="3.4" width="5" height="3.6" fill="#e6eef8" stroke="#6a8ab8" stroke-width="0.5"/><path d="M1 5h3.4" stroke="#3a5a9a" stroke-width="0.5"/><path d="M2.2 3.4C3 0.6 6.4 0.6 7.8 2.2L5.6 3.6L6.2 4.6L4.4 4.2z" fill="#f0c428" stroke="#b88a10" stroke-width="0.3"/><rect x="6" y="4" width="1.4" height="1.4" fill="#3a9a3a"/></svg>
<div class="t" style="left:25.4px;top:318.94px;font-size:6.33px;color:#111;-webkit-text-stroke:0.04px">runat</div>
<div class="a" style="left:6.6px;top:335.63px;width:106px;height:0.8px;background:#858585"></div>
<svg style="left:15px;top:328.03px" width="8" height="7.4" viewBox="0 0 8 7.4"><rect x="0.2" y="3.4" width="5" height="3.6" fill="#e6eef8" stroke="#6a8ab8" stroke-width="0.5"/><path d="M1 5h3.4" stroke="#3a5a9a" stroke-width="0.5"/><path d="M2.2 3.4C3 0.6 6.4 0.6 7.8 2.2L5.6 3.6L6.2 4.6L4.4 4.2z" fill="#f0c428" stroke="#b88a10" stroke-width="0.3"/><rect x="6" y="4" width="1.4" height="1.4" fill="#3a9a3a"/></svg>
<div class="t" style="left:25.4px;top:327.63px;font-size:6.33px;color:#111;-webkit-text-stroke:0.04px">style</div>
<div class="a" style="left:6.6px;top:344.32px;width:106px;height:0.8px;background:#858585"></div>
<svg style="left:15px;top:336.72px" width="8" height="7.4" viewBox="0 0 8 7.4"><rect x="0.2" y="3.4" width="5" height="3.6" fill="#e6eef8" stroke="#6a8ab8" stroke-width="0.5"/><path d="M1 5h3.4" stroke="#3a5a9a" stroke-width="0.5"/><path d="M2.2 3.4C3 0.6 6.4 0.6 7.8 2.2L5.6 3.6L6.2 4.6L4.4 4.2z" fill="#f0c428" stroke="#b88a10" stroke-width="0.3"/><rect x="6" y="4" width="1.4" height="1.4" fill="#3a9a3a"/></svg>
<div class="t" style="left:25.4px;top:336.32px;font-size:6.33px;color:#111;-webkit-text-stroke:0.04px">title</div>
<div class="a" style="left:6.6px;top:353.01px;width:106px;height:0.8px;background:#858585"></div>
<svg style="left:15px;top:345.41px" width="8" height="7.4" viewBox="0 0 8 7.4"><rect x="0.2" y="3.4" width="5" height="3.6" fill="#e6eef8" stroke="#6a8ab8" stroke-width="0.5"/><path d="M1 5h3.4" stroke="#3a5a9a" stroke-width="0.5"/><path d="M2.2 3.4C3 0.6 6.4 0.6 7.8 2.2L5.6 3.6L6.2 4.6L4.4 4.2z" fill="#f0c428" stroke="#b88a10" stroke-width="0.3"/><rect x="6" y="4" width="1.4" height="1.4" fill="#3a9a3a"/></svg>
<div class="t" style="left:25.4px;top:345.01px;font-size:6.33px;color:#111;-webkit-text-stroke:0.04px">visible</div>
<div class="a" style="left:6.6px;top:361.70px;width:106px;height:0.8px;background:#858585"></div>
<svg style="left:15px;top:354.10px" width="8" height="7.4" viewBox="0 0 8 7.4"><rect x="0.2" y="3.4" width="5" height="3.6" fill="#e6eef8" stroke="#6a8ab8" stroke-width="0.5"/><path d="M1 5h3.4" stroke="#3a5a9a" stroke-width="0.5"/><path d="M2.2 3.4C3 0.6 6.4 0.6 7.8 2.2L5.6 3.6L6.2 4.6L4.4 4.2z" fill="#f0c428" stroke="#b88a10" stroke-width="0.3"/><rect x="6" y="4" width="1.4" height="1.4" fill="#3a9a3a"/></svg>
<div class="t" style="left:25.4px;top:353.70px;font-size:6.33px;color:#111;-webkit-text-stroke:0.04px">xml:lang</div>
<div class="a" style="left:6.6px;top:362.19px;width:106px;height:8.6px;background:linear-gradient(#ededed,#dcdcdc)"></div>
<svg style="left:8.8px;top:363.99px" width="4.6" height="4.6" viewBox="0 0 4.6 4.6"><rect x="0.3" y="0.3" width="4" height="4" fill="#fff" stroke="#555" stroke-width="0.6"/><path d="M1.2 2.3h2.2" stroke="#111" stroke-width="0.7"/></svg>
<div class="t" style="left:16.4px;top:362.59px;font-size:6.78px;font-weight:bold;color:#111">Events</div>
<svg style="left:18px;top:371.19px" width="5" height="7.4" viewBox="0 0 5 7.4"><path d="M3 0L0.4 3.6h1.8L0.8 7.4L4.6 2.8H2.6L4.2 0z" fill="#f4cc20" stroke="#b89010" stroke-width="0.3"/></svg>
<div class="t" style="left:25px;top:370.99px;font-size:6.33px;color:#111;-webkit-text-stroke:0.04px">onclick</div>
<div class="a" style="left:61.2px;top:266.4px;width:0.8px;height:95.79px;background:#444"></div>
<div class="a" style="left:61.2px;top:370.79px;width:0.8px;height:8.01px;background:#444"></div>
<div class="a" style="left:113.6px;top:257px;width:7.6px;height:121.8px;background:#484848"></div>
<div class="a" style="left:115.0px;top:259.6px;width:0;height:0;border-left:2.3px solid transparent;border-right:2.3px solid transparent;border-bottom:3.4px solid #9a9a9a"></div>
<div class="a" style="left:115.0px;top:372.6px;width:0;height:0;border-left:2.3px solid transparent;border-right:2.3px solid transparent;border-top:3.4px solid #9a9a9a"></div>
<div class="a" style="left:115.2px;top:266.4px;width:4.4px;height:48px;background:#7c7c7c;border-radius:2.2px"></div><div class="a" style="left:127.4px;top:51px;width:350px;height:14.2px;background:#2e2e2e"></div>
<div class="a" style="left:127.6px;top:53px;width:31px;height:12.2px;background:#3b3b3b;border-radius:2.4px 2.4px 0 0"></div>
<div class="t" style="left:131px;top:55px;font-size:6.55px;color:#e4e4e4">Site View</div>
<div class="a" style="left:161.6px;top:52.8px;width:60.4px;height:12.6px;background:#505050;border-radius:2.4px 2.4px 0 0"></div>
<div class="t" style="left:165px;top:55px;font-size:6.55px;color:#f4f4f4">SearchPage.html*</div>
<svg style="left:215.4px;top:56.8px" width="2.8" height="2.8" viewBox="0 0 2.8 2.8"><path d="M0 0L2.8 2.8M2.8 0L0 2.8" stroke="#b8b8b8" stroke-width="0.7"/></svg>
<div class="a" style="left:127.4px;top:65.2px;width:350px;height:12.6px;background:#555"></div>
<div class="a" style="left:127.4px;top:77.8px;width:350px;height:168px;background:#232323"></div>
<div class="a bc" style="left:130px;width:4.4px;padding:0"></div>
<div class="a" style="left:131.2px;top:70.6px;width:0;height:0;border-top:1.3px solid transparent;border-bottom:1.3px solid transparent;border-right:1.6px solid #8a8a8a"></div>
<div class="a bc" style="left:136.8px;width:21.8px;"><div class="t" style="left:0.5px;top:-0.4px;font-size:6.50px;color:#8e8e8e">&lt;body&gt;</div></div>
<div class="a bc" style="left:160.8px;width:45px;"><div class="t" style="left:0.5px;top:-0.4px;font-size:6.50px;color:#8e8e8e">&lt;div#container&gt;</div></div>
<div class="a bc" style="left:208px;width:54px;"><div class="t" style="left:0.5px;top:-0.4px;font-size:6.50px;color:#8e8e8e">&lt;div#main-content&gt;</div></div>
<div class="a bc" style="left:264.4px;width:42.8px;border-color:#b8b8b8;"><div class="t" style="left:0.5px;top:-0.4px;font-size:6.50px;color:#f2f2f2">&lt;DWT:editable&gt;</div></div>
<div class="a bc" style="left:309.2px;width:13.6px;border-color:#b8b8b8;"><div class="t" style="left:0.5px;top:-0.4px;font-size:6.50px;color:#f2f2f2">&lt;p&gt;</div></div>
<div class="a bc" style="left:470.6px;width:5.4px;padding:0"></div>
<div class="a" style="left:472.4px;top:70.6px;width:0;height:0;border-top:1.3px solid transparent;border-bottom:1.3px solid transparent;border-left:1.6px solid #8a8a8a"></div>
<div class="a" style="left:127.8px;top:77.8px;width:349.6px;height:7.8px;background:#f1f1f1"></div>
<div class="t" style="left:448px;top:77.6px;font-size:6.55px;-webkit-text-stroke:0;color:#3838f0">master.dwt</div>
<div class="a" style="left:127.8px;top:85.6px;width:341px;height:148.2px;background:#fff;overflow:hidden" id="codev">
<div class="a" style="left:0;top:0;width:341px;height:3.2px;background:#fffbe6"></div>
<div class="a" style="left:0;top:0;width:19.4px;height:150px;background:#f4f4f4"></div>
<div class="a code" style="left:0;top:3.30px"><span class="ln">38</span><span class="c hl">            <span class="nm"><span class="tg">&lt;</span>ul<span class="tg">&gt;</span></span></span></div>
<div class="a code" style="left:0;top:10.46px"><span class="ln">39</span><span class="c hl">                <span class="nm"><span class="tg">&lt;</span>li<span class="tg">&gt;</span></span><span class="nm"><span class="tg">&lt;</span>a </span><span class="at">href=</span><span class="vl">"<u>index.html</u>"</span> <span class="at">title=</span><span class="vl">"Site Home Page"</span><span class="nm"><span class="tg">&gt;</span></span><span class="tx">Home</span><span class="nm"><span class="tg">&lt;</span><span class="tg">/</span>a<span class="tg">&gt;</span></span><span class="nm"><span class="tg">&lt;</span><span class="tg">/</span>li<span class="tg">&gt;</span></span></span></div>
<div class="a code" style="left:0;top:17.63px"><span class="ln">40</span><span class="c hl">                <span class="nm"><span class="tg">&lt;</span>li<span class="tg">&gt;</span></span><span class="nm"><span class="tg">&lt;</span>a </span><span class="at">href=</span><span class="vl">"<u>index.html</u>"</span> <span class="at">title=</span><span class="vl">"Navigation Item 1."</span><span class="nm"><span class="tg">&gt;</span></span><span class="tx">Navigation Item 1</span><span class="nm"><span class="tg">&lt;</span><span class="tg">/</span>a<span class="tg">&gt;</span></span><span class="nm"><span class="tg">&lt;</span><span class="tg">/</span>li<span class="tg">&gt;</span></span></span></div>
<div class="a code" style="left:0;top:24.80px"><span class="ln">41</span><span class="c hl">                <span class="nm"><span class="tg">&lt;</span>li<span class="tg">&gt;</span></span><span class="nm"><span class="tg">&lt;</span>a </span><span class="at">href=</span><span class="vl">"<u>index.html</u>"</span> <span class="at">title=</span><span class="vl">"Navigation Item 2."</span><span class="nm"><span class="tg">&gt;</span></span><span class="tx">Navigation Item 2</span><span class="nm"><span class="tg">&lt;</span><span class="tg">/</span>a<span class="tg">&gt;</span></span><span class="nm"><span class="tg">&lt;</span><span class="tg">/</span>li<span class="tg">&gt;</span></span></span></div>
<div class="a code" style="left:0;top:31.96px"><span class="ln">42</span><span class="c hl">                <span class="nm"><span class="tg">&lt;</span>li<span class="tg">&gt;</span></span><span class="nm"><span class="tg">&lt;</span>a </span><span class="at">href=</span><span class="vl">"<u>index.html</u>"</span> <span class="at">title=</span><span class="vl">"Navigation Item 3."</span><span class="nm"><span class="tg">&gt;</span></span><span class="tx">Navigation Item 3</span><span class="nm"><span class="tg">&lt;</span><span class="tg">/</span>a<span class="tg">&gt;</span></span><span class="nm"><span class="tg">&lt;</span><span class="tg">/</span>li<span class="tg">&gt;</span></span></span></div>
<div class="a code" style="left:0;top:39.12px"><span class="ln">43</span><span class="c"></span></div>
<div class="a code" style="left:0;top:46.29px"><span class="ln">44</span><span class="c hl">            <span class="nm"><span class="tg">&lt;</span><span class="tg">/</span>ul<span class="tg">&gt;</span></span></span></div>
<div class="a code" style="left:0;top:53.45px"><span class="ln">45</span><span class="c hl">        <span class="nm"><span class="tg">&lt;</span><span class="tg">/</span>div<span class="tg">&gt;</span></span></span></div>
<div class="a code" style="left:0;top:60.62px"><span class="ln">46</span><span class="c hl">        </span></div>
<div class="a code" style="left:0;top:67.78px"><span class="ln">47</span><span class="c hl">        <span class="nm"><span class="tg">&lt;</span>div </span><span class="at">id=</span><span class="vl">"<u>main-content</u>"</span><span class="nm"><span class="tg">&gt;</span></span> <span class="cm">&lt;!-- #BeginEditable &quot;main-content&quot; --&gt;</span></span></div>
<div class="a code" style="left:0;top:74.95px"><span class="ln">48</span><span class="c">            <span class="nm"><span class="tg">&lt;</span>p<span class="tg">&gt;</span></span><span class="tx">(main-content)</span><span class="nm"><span class="tg">&lt;</span><span class="tg">/</span>p<span class="tg">&gt;</span></span></span></div>
<div class="a code" style="left:0;top:82.11px"><span class="ln">49</span><span class="c hl"><span class="cm">&lt;!-- #EndEditable --&gt;</span></span></div>
<div class="a code" style="left:0;top:89.28px"><span class="ln">50</span><span class="c hl">        <span class="nm"><span class="tg">&lt;</span><span class="tg">/</span>div<span class="tg">&gt;</span></span></span></div>
<div class="a code" style="left:0;top:96.44px"><span class="ln">51</span><span class="c hl">        <span class="nm"><span class="tg">&lt;</span>div </span><span class="at">id=</span><span class="vl">"<u>footer</u>"</span><span class="nm"><span class="tg">&gt;</span></span> <span class="nm"><span class="tg">&lt;</span><span class="tg">/</span>div<span class="tg">&gt;</span></span></span></div>
<div class="a code" style="left:0;top:103.61px"><span class="ln">52</span><span class="c hl">    <span class="nm"><span class="tg">&lt;</span><span class="tg">/</span>div<span class="tg">&gt;</span></span></span></div>
<div class="a code" style="left:0;top:110.77px"><span class="ln">53</span><span class="c hl">    </span></div>
<div class="a code" style="left:0;top:117.94px"><span class="ln">54</span><span class="c hl"><span class="nm"><span class="tg">&lt;</span><span class="tg">/</span>body<span class="tg">&gt;</span></span></span></div>
<div class="a code" style="left:0;top:125.11px"><span class="ln">55</span><span class="c"></span></div>
<div class="a code" style="left:0;top:132.27px"><span class="ln">56</span><span class="c hl"><span class="cm">&lt;!-- #EndTemplate --&gt;</span></span></div>
<div class="a code" style="left:0;top:139.44px"><span class="ln">57</span><span class="c"></span></div>
<div class="a code" style="left:0;top:146.60px"><span class="ln">58</span><span class="c hl"><span class="nm"><span class="tg">&lt;</span><span class="tg">/</span>html<span class="tg">&gt;</span></span></span></div>
<div class="a" style="left:74.6px;top:75.2px;width:0.7px;height:6.6px;background:#333"></div>
</div>
<div class="a" style="left:468.8px;top:85.6px;width:8.6px;height:148.2px;background:#464646"></div>
<div class="a" style="left:470.8px;top:88.2px;width:0;height:0;border-left:2.3px solid transparent;border-right:2.3px solid transparent;border-bottom:3.4px solid #9a9a9a"></div>
<div class="a" style="left:470.8px;top:225.0px;width:0;height:0;border-left:2.3px solid transparent;border-right:2.3px solid transparent;border-top:3.4px solid #9a9a9a"></div>
<div class="a" style="left:470.4px;top:176.6px;width:4.4px;height:43.6px;background:#787878;border-radius:2.2px"></div>
<div class="a" style="left:127.8px;top:234.4px;width:341px;height:7.6px;background:#464646"></div>
<div class="a" style="left:468.8px;top:234.4px;width:8.6px;height:7.6px;background:#606060"></div>
<div class="a" style="left:131.0px;top:235.9px;width:0;height:0;border-top:2.3px solid transparent;border-bottom:2.3px solid transparent;border-right:3.4px solid #9a9a9a"></div>
<div class="a" style="left:462.8px;top:235.9px;width:0;height:0;border-top:2.3px solid transparent;border-bottom:2.3px solid transparent;border-left:3.4px solid #9a9a9a"></div>
<div class="a" style="left:137.4px;top:236px;width:238px;height:4.4px;background:#787878;border-radius:2.2px"></div>
<div class="a" style="left:127.4px;top:242.4px;width:350px;height:3.4px;background:#2c2c2c"></div>
<div class="a" id="dv" style="left:127.8px;top:245.8px;width:341px;height:124px;background:#e5e5e5;overflow:hidden">
<div class="a" style="left:0;top:0;width:11.2px;height:124px;background:#b7e4e6"></div>
<div class="a" style="left:5.5px;top:0;width:1.6px;height:124px;background:#d4686a"></div>
<div class="a" style="left:316.8px;top:0;width:24.2px;height:124px;background:#bbe5e6"></div>
<div class="a" style="left:333.4px;top:0;width:0.8px;height:124px;background:#d86468"></div>
<div class="a" style="left:335.5px;top:0;width:0.8px;height:124px;background:#d86468"></div>
<div class="a" style="left:15.4px;top:0;width:297.2px;height:57.8px;background:#5aa63d;border-bottom:1.4px solid #0e5e0e"></div>
<div class="a" style="left:99.4px;top:62px;width:150px;height:11px;background:#2b8a2b"></div>
<div class="t d" style="left:100.6px;top:64.2px;font-size:7.34px;color:#e4f2dc;font-family:'Liberation Sans',sans-serif"><u>Home</u> <u>Menu Item 1</u> <u>Menu Item 2</u> <u>Menu Item 3</u></div>
<div class="a" style="left:15.4px;top:94px;width:297.4px;height:1.2px;background:#2e7e2e"></div>
<svg style="left:15.4px;top:105.4px" width="99" height="30" viewBox="0 0 99 30"><rect x="0.5" y="0.5" width="97.8" height="40" fill="none" stroke="#1c5c1c" stroke-width="1" stroke-dasharray="1.7 1.3"/></svg>
<div class="t d" style="left:19.2px;top:110px;font-size:7.0px;color:#3636e0">Site Navigation</div>
<div class="a" style="left:116.6px;top:97.6px;width:37.4px;height:7px;background:#fff;border:0.7px solid #f4bc78;border-radius:1px"></div>
<div class="t d" style="left:118.8px;top:96.6px;font-size:5.4px;color:#2a2ae0">main-content</div>
<div class="a" style="left:155.6px;top:96.4px;width:7.8px;height:8.2px;background:#fff;border:0.7px solid #6a8ad8;border-radius:1px"></div>
<div class="t d" style="left:158px;top:95.8px;font-size:5.8px;color:#222;-webkit-text-stroke:0.04px">p</div>
<div class="a" style="left:115.8px;top:104.2px;width:193.6px;height:12.4px;background:#ccffcc;border:1px solid #f2b868;outline:0.5px solid #a4b8e6"></div>
<div class="t d" style="left:118.4px;top:106px;font-size:7.45px;color:#2a2ae0">(main-content)</div>
</div>
<div class="a" style="left:468.8px;top:245.8px;width:8.6px;height:124px;background:#464646"></div>
<div class="a" style="left:470.8px;top:248.6px;width:0;height:0;border-left:2.3px solid transparent;border-right:2.3px solid transparent;border-bottom:3.4px solid #9a9a9a"></div>
<div class="a" style="left:470.8px;top:364.2px;width:0;height:0;border-left:2.3px solid transparent;border-right:2.3px solid transparent;border-top:3.4px solid #9a9a9a"></div>
<div class="a" style="left:470.6px;top:272px;width:4.4px;height:44px;background:#787878;border-radius:2.2px"></div>
<div class="a" style="left:127.4px;top:369.8px;width:350px;height:10.4px;background:#3b3b3b"></div>
<div class="a" style="left:127.4px;top:369.8px;width:76.6px;height:10.4px;background:#2f2f2f"></div>
<div class="a" style="left:157.4px;top:369.8px;width:21.8px;height:10.4px;background:#555"></div>
<div class="a" style="left:468.8px;top:369.8px;width:8.6px;height:10.4px;background:#5c5c5c"></div>
<div class="t" style="left:133px;top:371px;font-size:6.55px;color:#e8e8e8">Design</div>
<div class="t" style="left:162px;top:371px;font-size:6.55px;color:#f0f0f0">Split</div>
<div class="t" style="left:184.6px;top:371px;font-size:6.55px;color:#e8e8e8">Code</div>
<div class="a" style="left:206.6px;top:372.7px;width:0;height:0;border-top:2.3px solid transparent;border-bottom:2.3px solid transparent;border-right:3.4px solid #050505"></div>
<div class="a" style="left:462.8px;top:372.7px;width:0;height:0;border-top:2.3px solid transparent;border-bottom:2.3px solid transparent;border-left:3.4px solid #050505"></div>
<div class="a" style="left:127.4px;top:380.2px;width:350px;height:1.4px;background:#151515"></div><div class="a pan" style="left:480px;top:51.2px;width:116.6px;height:163.4px"></div>
<div class="a" style="left:517px;top:53.4px;width:40px;height:9.4px;background:#343434;border-radius:3px 7px 0 0"></div>
<svg style="left:481.6px;top:53px" width="40" height="10" viewBox="0 0 40 10"><path d="M0 10V2.4Q0 0 2.4 0H29.4Q31.4 0 32.6 1.4L39.4 10z" fill="#595959"/></svg>
<svg style="left:546px;top:53.4px" width="11" height="9.4" viewBox="0 0 11 9.4"><path d="M0 0H1.6Q3.4 0 4.6 1.4L11 9.4H0z" fill="#343434"/><path d="M1.6 0Q3.4 0 4.6 1.4L11 9.4V0z" fill="#000"/></svg>
<div class="a pb" style="left:481.6px;top:62.4px;width:112.8px;height:150.8px"></div>
<div class="t fl" style="left:485px;top:54.8px;font-size:6.44px">Toolbox</div>
<svg style="left:509.2px;top:56.8px" width="2.8" height="2.8" viewBox="0 0 2.8 2.8"><path d="M0 0L2.8 2.8M2.8 0L0 2.8" stroke="#b8b8b8" stroke-width="0.7"/></svg>
<div class="t fl" style="left:522px;top:54.8px;font-size:6.44px">Snippets</div>
<svg style="left:582px;top:55px" width="4.6" height="6.4" viewBox="0 0 4.6 6.4"><path d="M1.2 0.5h2.2v2.4h0.8v0.8h-3.8v-0.8h0.8z" fill="#cfcfcf"/><path d="M2.3 3.7v2.5" stroke="#cfcfcf" stroke-width="0.6"/></svg>
<svg style="left:590.4px;top:56.4px" width="3.8" height="3.8" viewBox="0 0 3.8 3.8"><path d="M0 0L3.8 3.8M3.8 0L0 3.8" stroke="#d8d8d8" stroke-width="0.75"/></svg>
<svg style="left:483.8px;top:66.39999999999999px" width="4.4" height="2.7" viewBox="0 0 4.4 2.7"><path d="M0 0H4.4L2.2 2.7z" fill="#e0e0e0"/></svg>
<div class="t fl" style="left:490.4px;top:64.2px;font-size:6.67px;font-weight:bold">HTML</div>
<svg style="left:488.8px;top:76.6px" width="4.4" height="2.7" viewBox="0 0 4.4 2.7"><path d="M0 0H4.4L2.2 2.7z" fill="#c8c8c8"/></svg>
<div class="t fl" style="left:496px;top:73.9px;font-size:6.67px;font-weight:bold">Tags</div>
<svg style="left:494px;top:83.6px" width="7.6" height="7.6" viewBox="0 0 7.6 7.6"><rect x="0" y="0.6" width="7.4" height="6.2" fill="#f4f6fa"/><path d="M0.8 2h1.2M0.8 3.7h1.2M0.8 5.4h1.2" stroke="#3a5ac0" stroke-width="0.8"/><path d="M3 2h3.6M3 3.7h3.6M3 5.4h3.6" stroke="#8aa0d8" stroke-width="0.8"/></svg>
<div class="t fl" style="left:504px;top:83.3px;font-size:6.33px">&lt;div&gt;</div>
<svg style="left:494px;top:93.6px" width="7.6" height="7.6" viewBox="0 0 7.6 7.6"><rect x="0.3" y="1.8" width="6.4" height="3.8" fill="none" stroke="#2a3a8a" stroke-width="0.6" stroke-dasharray="0.7 0.5"/><path d="M3.5 2.6v2.2" stroke="#8aa0d8" stroke-width="0.7"/></svg>
<div class="t fl" style="left:504px;top:93.7px;font-size:6.33px">&lt;span&gt;</div>
<svg style="left:494px;top:103.6px" width="7.6" height="7.6" viewBox="0 0 7.6 7.6"><rect x="1" y="0.2" width="6.4" height="2.6" fill="#f0f2f6" stroke="#8a9ab8" stroke-width="0.4"/><rect x="1" y="4.8" width="6.4" height="2.6" fill="#f0f2f6" stroke="#8a9ab8" stroke-width="0.4"/><path d="M0 3.8l1.6-1.2v2.4z" fill="#3a6ae0"/><path d="M1 3.8h6" stroke="#5a80d8" stroke-width="0.7"/></svg>
<div class="t fl" style="left:503px;top:103.9px;font-size:6.33px">Break</div>
<svg style="left:494px;top:114.2px" width="7.6" height="7.6" viewBox="0 0 7.6 7.6"><rect x="0.3" y="1.6" width="7" height="4.4" fill="#6a7aa0" stroke="#e8ecf4" stroke-width="0.6"/><rect x="1.2" y="3" width="5.2" height="1.6" fill="#f4f6fa"/></svg>
<div class="t fl" style="left:503px;top:114.3px;font-size:6.33px">Horizontal Line</div>
<svg style="left:494px;top:124.4px" width="7.6" height="7.6" viewBox="0 0 7.6 7.6"><rect x="0" y="0.2" width="7" height="7.2" fill="#6aa0e0"/><path d="M0 7.4v-2l2.4-2.4l2.2 2.2l1-1l1.4 1.4v1.8z" fill="#4a9a3a"/><circle cx="4.6" cy="2.2" r="1.1" fill="#f08030"/><rect x="0" y="0.2" width="7" height="7.2" fill="none" stroke="#dfe6f2" stroke-width="0.5"/></svg>
<div class="t fl" style="left:503px;top:124.5px;font-size:6.33px">Image</div>
<svg style="left:494px;top:134.6px" width="7.6" height="7.6" viewBox="0 0 7.6 7.6"><rect x="0" y="0" width="6.4" height="6" fill="#2a2a2a"/><path d="M1.4 0.6v4.8M3.2 0.6v4.8" stroke="#e8e8e8" stroke-width="0.8"/><path d="M4.6 0.6v4.8" stroke="#5ab05a" stroke-width="0.8"/><path d="M0.4 2h5.6M0.4 4h5.6" stroke="#888" stroke-width="0.4"/></svg>
<div class="t fl" style="left:503px;top:134.7px;font-size:6.33px">Inline Frame</div>
<svg style="left:494px;top:144.8px" width="7.6" height="7.6" viewBox="0 0 7.6 7.6"><rect x="0.4" y="0.6" width="6.8" height="6" fill="#f8fafe" stroke="#2a4ad8" stroke-width="0.9"/><path d="M0.4 1.2h3l0.6 1h3.2" stroke="#2a4ad8" stroke-width="1"/></svg>
<div class="t fl" style="left:503px;top:144.9px;font-size:6.33px">Layer</div>
<svg style="left:494px;top:155.2px" width="7.6" height="7.6" viewBox="0 0 7.6 7.6"><path d="M4.6 0.6v6.4M3 0.6v6.4M5.6 0.6H2.6" stroke="#f0f0f0" stroke-width="0.8" fill="none"/><path d="M3 0.6a1.8 1.8 0 0 0 0 3.4z" fill="#f0f0f0"/></svg>
<div class="t fl" style="left:503px;top:155.3px;font-size:6.33px">Paragraph</div>
<svg style="left:488.8px;top:172.8px" width="4.4" height="2.7" viewBox="0 0 4.4 2.7"><path d="M0 0H4.4L2.2 2.7z" fill="#c8c8c8"/></svg>
<div class="t fl" style="left:496px;top:169.6px;font-size:6.67px;font-weight:bold">Form Controls</div>
<svg style="left:494px;top:180.6px" width="7.6" height="7.6" viewBox="0 0 7.6 7.6"><rect x="0" y="0.4" width="7.2" height="5" fill="#f2f2f2" stroke="#c8c8c8" stroke-width="0.4"/><path d="M0.8 4.4l0.9-2.8l0.9 2.8" stroke="#d02020" stroke-width="0.7" fill="none"/><path d="M3.2 1.6v2.8h1v-2.8z" stroke="#2a9a2a" stroke-width="0.6" fill="none"/><path d="M6.6 2c-1.6-0.8-1.6 3 0 2.2" stroke="#2a3ad8" stroke-width="0.7" fill="none"/></svg>
<div class="t fl" style="left:503px;top:180.3px;font-size:6.33px">Advanced Button</div>
<svg style="left:494px;top:189.8px" width="7.6" height="7.6" viewBox="0 0 7.6 7.6"><rect x="0.3" y="1.4" width="7" height="6" fill="#5a6a98" stroke="#c8d0e4" stroke-width="0.6"/><rect x="1" y="2.6" width="2.6" height="4" fill="#1a1a2a"/><rect x="4.6" y="2.4" width="2" height="2" fill="#e8ecf8"/><rect x="4.6" y="5" width="2" height="1.6" fill="#a8b4d8"/><path d="M0.4 0.6h5l1.4 1" stroke="#d8dcec" stroke-width="0.6" fill="none"/></svg>
<div class="t fl" style="left:503px;top:190.5px;font-size:6.33px">Drop-Down Box</div>
<svg style="left:494px;top:200.8px" width="7.6" height="7.6" viewBox="0 0 7.6 7.6"><rect x="0.3" y="0.4" width="6.6" height="5.6" fill="none" stroke="#7c7c7c" stroke-width="0.6" stroke-dasharray="0.7 0.6"/></svg>
<div class="t fl" style="left:503px;top:200.7px;font-size:6.33px">Form</div>
<div class="a" style="left:494px;top:210.6px;width:8px;height:2.6px;overflow:hidden"><div class="a" style="left:0.4px;top:0.4px;width:7px;height:5px;border:0.7px solid #8a8a8a;border-radius:3px"></div></div>
<div class="a" style="left:503px;top:211.4px;width:40px;height:1.8px;overflow:hidden"><div class="t fl" style="left:0;top:-0.2px;font-size:6.33px">Group Box</div></div>
<div class="a" style="left:586.8px;top:63.2px;width:7.2px;height:150px;background:#484848"></div>
<div class="a" style="left:588.0px;top:65.8px;width:0;height:0;border-left:2.3px solid transparent;border-right:2.3px solid transparent;border-bottom:3.4px solid #9a9a9a"></div>
<div class="a" style="left:588.0px;top:207.6px;width:0;height:0;border-left:2.3px solid transparent;border-right:2.3px solid transparent;border-top:3.4px solid #9a9a9a"></div>
<div class="a" style="left:588.2px;top:72.4px;width:4.2px;height:64px;background:#7c7c7c;border-radius:2.1px"></div>
<div class="a pan" style="left:480px;top:215.6px;width:116.6px;height:165px"></div>
<div class="a" style="left:482px;top:219.2px;width:40px;height:9.8px;background:#3a3a3a;border-radius:3px 4px 0 0"></div>
<svg style="left:523px;top:218.8px" width="60" height="10.2" viewBox="0 0 60 10.2"><path d="M0 10.2V2.4Q0 0 2.4 0H50.4Q52.4 0 53.6 1.4L59.4 10.2z" fill="#595959"/></svg>
<div class="a pb" style="left:481.6px;top:228.8px;width:112.8px;height:150.6px"></div>
<div class="t fl" style="left:486px;top:220.9px;font-size:6.44px">Apply Styles</div>
<div class="t fl" style="left:527px;top:220.9px;font-size:6.44px">Manage Styles</div>
<svg style="left:568.2px;top:222.4px" width="2.8" height="2.8" viewBox="0 0 2.8 2.8"><path d="M0 0L2.8 2.8M2.8 0L0 2.8" stroke="#b8b8b8" stroke-width="0.7"/></svg>
<svg style="left:582.4px;top:220.6px" width="4.6" height="6.4" viewBox="0 0 4.6 6.4"><path d="M1.2 0.5h2.2v2.4h0.8v0.8h-3.8v-0.8h0.8z" fill="#cfcfcf"/><path d="M2.3 3.7v2.5" stroke="#cfcfcf" stroke-width="0.6"/></svg>
<svg style="left:590.6px;top:222px" width="3.8" height="3.8" viewBox="0 0 3.8 3.8"><path d="M0 0L3.8 3.8M3.8 0L0 3.8" stroke="#d8d8d8" stroke-width="0.75"/></svg>
<div class="t" style="left:485px;top:233.8px;font-size:6.44px;color:#62aee6">New Style...</div>
<div class="a" style="left:554px;top:232px;width:37.4px;height:11.8px;border:0.8px solid #909090;border-radius:1px"></div>
<div class="t fl" style="left:559px;top:233.8px;font-size:6.33px">Options</div>
<svg style="left:580.8px;top:236.60000000000002px" width="4.4" height="2.7" viewBox="0 0 4.4 2.7"><path d="M0 0H4.4L2.2 2.7z" fill="#f0f0f0"/></svg>
<svg style="left:485px;top:246px" width="8.4" height="8.6" viewBox="0 0 8.4 8.6"><rect x="0.6" y="0.2" width="6.4" height="7.8" fill="#f0f0f0"/><path d="M0.8 5.6L3 0.8L5 5.6M1.8 3.8h2.4" stroke="#c0181c" stroke-width="1.1" fill="none"/><path d="M1.4 7.2c1.2 1.2 3.8 1.2 5 0M5.6 3.6c1.4 0.6 2.2 2 1.6 3.4" stroke="#8a9ad0" stroke-width="0.9" fill="none"/><rect x="5.4" y="1" width="1.6" height="1.8" fill="#3a9a3a"/></svg>
<div class="t" style="left:496px;top:245.8px;font-size:6.44px;color:#62aee6">Attach Style Sheet...</div>
<div class="t fl" style="left:485px;top:259.4px;font-size:6.67px;color:#fafafa">CSS styles:</div>
<div class="a" style="left:482.4px;top:267.2px;width:111px;height:61.2px;background:#fff;border-top:0.8px solid #3a3a3a"></div>
<div class="a" style="left:482.4px;top:268px;width:102px;height:9px;background:linear-gradient(#efefef,#dedede)"></div>
<svg style="left:485px;top:270.4px" width="4.6" height="4.6" viewBox="0 0 4.6 4.6"><rect x="0.3" y="0.3" width="4" height="4" fill="#fff" stroke="#555" stroke-width="0.6"/><path d="M1.2 2.3h2.2" stroke="#111" stroke-width="0.7"/></svg>
<div class="t" style="left:492px;top:269px;font-size:6.78px;font-weight:bold;color:#111">Current Page</div>
<svg style="left:491px;top:278px" width="8" height="8" viewBox="0 0 8 8"><circle cx="4" cy="4" r="2" fill="#d8452a"/><circle cx="3.5" cy="3.4" r="0.9" fill="#f6a890"/></svg>
<div class="t" style="left:501px;top:278px;font-size:6.33px;color:#222;-webkit-text-stroke:0.04px">#left-nav ul li a:hover</div>
<svg style="left:491px;top:286.4px" width="8" height="8" viewBox="0 0 8 8"><circle cx="4" cy="4" r="2" fill="#d8452a"/><circle cx="3.5" cy="3.4" r="0.9" fill="#f6a890"/></svg>
<div class="t" style="left:501px;top:286.4px;font-size:6.33px;color:#222;-webkit-text-stroke:0.04px">#left-nav ul li a:hover</div>
<div class="a" style="left:482.4px;top:295px;width:102px;height:8.6px;background:linear-gradient(#efefef,#dedede)"></div>
<svg style="left:485px;top:297px" width="4.6" height="4.6" viewBox="0 0 4.6 4.6"><rect x="0.3" y="0.3" width="4" height="4" fill="#fff" stroke="#555" stroke-width="0.6"/><path d="M1.2 2.3h2.2" stroke="#111" stroke-width="0.7"/></svg>
<div class="t" style="left:492px;top:295.2px;font-size:6.78px;font-weight:bold;color:#111">sample.css</div>
<svg style="left:490.8px;top:304.4px" width="8" height="8" viewBox="0 0 8 8"><circle cx="4" cy="4" r="3.5" fill="#fff" stroke="#8a8a8a" stroke-width="0.5"/><circle cx="4" cy="4" r="2" fill="#2a7ae8"/><circle cx="3.5" cy="3.4" r="0.9" fill="#a8d0ff"/></svg>
<div class="t" style="left:500px;top:304.9px;font-size:6.33px;color:#222;-webkit-text-stroke:0.04px">body</div>
<svg style="left:490.8px;top:312.6px" width="8" height="8" viewBox="0 0 8 8"><circle cx="4" cy="4" r="3.5" fill="#fff" stroke="#8a8a8a" stroke-width="0.5"/><circle cx="4" cy="4" r="2" fill="#d8452a"/><circle cx="3.5" cy="3.4" r="0.9" fill="#f6a890"/></svg>
<div class="t" style="left:500.4px;top:312.6px;font-size:6.33px;color:#222;-webkit-text-stroke:0.04px">#container</div>
<svg style="left:490.8px;top:320.8px" width="8" height="8" viewBox="0 0 8 8"><circle cx="4" cy="4" r="3.5" fill="#fff" stroke="#8a8a8a" stroke-width="0.5"/><circle cx="4" cy="4" r="2" fill="#d8452a"/><circle cx="3.5" cy="3.4" r="0.9" fill="#f6a890"/></svg>
<div class="t" style="left:500.4px;top:320.8px;font-size:6.33px;color:#222;-webkit-text-stroke:0.04px">#header</div>
<div class="a" style="left:585px;top:268px;width:7.6px;height:60.4px;background:#484848"></div>
<div class="a" style="left:586.4px;top:270.0px;width:0;height:0;border-left:2.3px solid transparent;border-right:2.3px solid transparent;border-bottom:3.4px solid #9a9a9a"></div>
<div class="a" style="left:586.4px;top:322.6px;width:0;height:0;border-left:2.3px solid transparent;border-right:2.3px solid transparent;border-top:3.4px solid #9a9a9a"></div>
<div class="a" style="left:586.6px;top:276px;width:4.4px;height:17.4px;background:#7c7c7c;border-radius:2.2px"></div>
<div class="t fl" style="left:485px;top:332.5px;font-size:6.84px;font-weight:bold;color:#fafafa">Selected style preview:</div>
<div class="a" style="left:483.6px;top:341px;width:109.6px;height:37.6px;background:#fff"></div>
<div class="a" style="left:4px;top:383.2px;width:592.4px;height:14.8px;background:#000;border-radius:3px"></div>
<div class="a" style="left:1.4px;top:398px;width:597px;height:1.6px;background:#3a3a3a"></div>
<div class="a" style="left:367px;top:385.6px;width:0.8px;height:10px;background:#5a5a5a"></div>
<svg style="left:372px;top:386.4px" width="8" height="8.4" viewBox="0 0 8 8.4"><path d="M0.4 0h4.4l1.8 1.8v6.2h-6.2z" fill="#f0f0f0"/><path d="M2 4.6l1.4 1.6l3-3.6" stroke="#2a9a2a" stroke-width="1" fill="none"/></svg>
<svg style="left:382.2px;top:389.6px" width="4" height="2.5" viewBox="0 0 4 2.5"><path d="M0 0H4L2 2.5z" fill="#f0f0f0"/></svg>
<svg style="left:395.6px;top:386.6px" width="8" height="8" viewBox="0 0 8 8"><rect x="0.4" y="0.2" width="6" height="7" fill="#8cc46a"/><rect x="1.4" y="1.4" width="4" height="2.6" fill="#d8efc8"/><rect x="4.6" y="4.6" width="3" height="3" fill="#e8e8e8"/></svg>
<svg style="left:406.0px;top:389.6px" width="4" height="2.5" viewBox="0 0 4 2.5"><path d="M0 0H4L2 2.5z" fill="#f0f0f0"/></svg>
<div class="t" style="left:419px;top:386.4px;font-size:6.33px;color:#e8e8e8">XHTML 1.0 T</div>
<div class="t" style="left:459px;top:386.4px;font-size:6.33px;color:#e8e8e8">3.17 KB</div>
<div class="a" style="left:481.4px;top:385.6px;width:0.8px;height:10px;background:#5a5a5a"></div>
<svg style="left:486px;top:386.4px" width="8.4" height="8.4" viewBox="0 0 8.4 8.4"><rect x="0.3" y="0.3" width="7.8" height="7.8" fill="#f4f4f4" stroke="#c8c8c8" stroke-width="0.5"/><path d="M0.6 7.8L7.8 0.6" stroke="#444" stroke-width="0.8"/><path d="M0.6 7.8L7.8 7.8L7.8 0.6z" fill="#cfd4dc"/></svg>
<svg style="left:496.8px;top:389.6px" width="4" height="2.5" viewBox="0 0 4 2.5"><path d="M0 0H4L2 2.5z" fill="#f0f0f0"/></svg>
<svg style="left:510px;top:386.4px" width="8.4" height="8.4" viewBox="0 0 8.4 8.4"><rect x="0.3" y="0.3" width="7.8" height="7.8" fill="#5a78d8" stroke="#c8d0f0" stroke-width="0.5"/><path d="M1.6 6.8L6.4 2" stroke="#e8ecff" stroke-width="1.1"/><rect x="1.4" y="1.4" width="2.4" height="2" fill="#c0ccf4"/></svg>
<svg style="left:520.8px;top:389.6px" width="4" height="2.5" viewBox="0 0 4 2.5"><path d="M0 0H4L2 2.5z" fill="#f0f0f0"/></svg>
<div class="t" style="left:533px;top:386.4px;font-size:6.33px;color:#e8e8e8">CSS 2.1</div>
<div class="t" style="left:560px;top:386.4px;font-size:6.33px;color:#e8e8e8">667 x 243</div>
<svg style="left:587.0px;top:389.6px" width="4" height="2.5" viewBox="0 0 4 2.5"><path d="M0 0H4L2 2.5z" fill="#f0f0f0"/></svg></body></html>
